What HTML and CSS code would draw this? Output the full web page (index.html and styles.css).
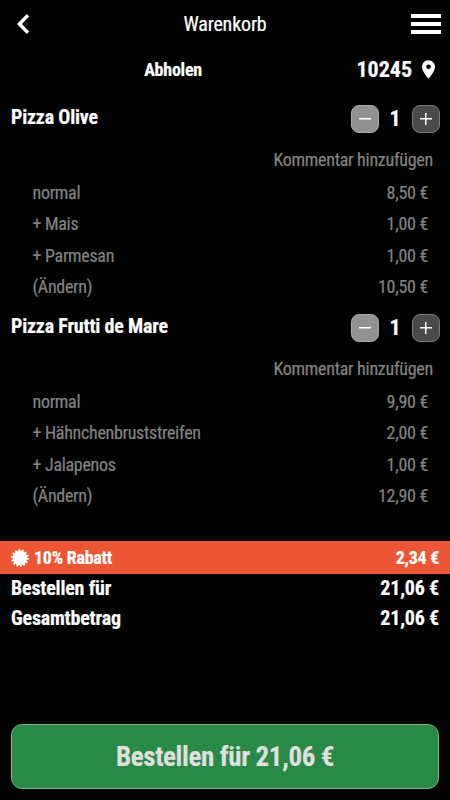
FILE: index.html
```html
<!DOCTYPE html>
<html lang="de">
<head>
<meta charset="utf-8">
<title>Warenkorb</title>
<link rel="stylesheet" href="styles.css">
</head>
<body>
<header class="topbar">
  <svg class="back" viewBox="0 0 14 20"><path d="M12 1.3 3.4 10l8.6 8.7" fill="none" stroke="#fff" stroke-width="3.4"/></svg>
  <h1>Warenkorb</h1>
  <div class="menu"><span></span><span></span><span></span></div>
</header>
<div class="pickup">
  <strong class="mode">Abholen</strong>
  <strong class="zip">10245</strong>
  <svg class="pin" viewBox="5 2 14 20"><path fill="#fff" d="M12 2C8.13 2 5 5.13 5 9c0 5.25 7 13 7 13s7-7.75 7-13c0-3.87-3.13-7-7-7zm0 9.5a2.5 2.5 0 0 1 0-5 2.5 2.5 0 0 1 0 5z"/></svg>
</div>
<main>
  <section class="item">
    <div class="head"><h2>Pizza Olive</h2><div class="stepper"><button class="minus"></button><b>1</b><button class="plus"></button></div></div>
    <div class="comment">Kommentar hinzufügen</div>
    <div class="row"><span>normal</span><span>8,50 €</span></div>
    <div class="row"><span>+ Mais</span><span>1,00 €</span></div>
    <div class="row"><span>+ Parmesan</span><span>1,00 €</span></div>
    <div class="row"><span>(Ändern)</span><span>10,50 €</span></div>
  </section>
  <section class="item">
    <div class="head"><h2>Pizza Frutti de Mare</h2><div class="stepper"><button class="minus"></button><b>1</b><button class="plus"></button></div></div>
    <div class="comment">Kommentar hinzufügen</div>
    <div class="row"><span>normal</span><span>9,90 €</span></div>
    <div class="row"><span>+ Hähnchenbruststreifen</span><span>2,00 €</span></div>
    <div class="row"><span>+ Jalapenos</span><span>1,00 €</span></div>
    <div class="row"><span>(Ändern)</span><span>12,90 €</span></div>
  </section>
</main>
<div class="discount">
  <svg class="badge" viewBox="-9 -9 18 18"><circle r="7.4" fill="#fff"/><circle r="7.8" fill="none" stroke="#fff" stroke-width="2.2" stroke-dasharray="1.75 1.75"/></svg>
  <span>10% Rabatt</span><span class="amount">2,34 €</span>
</div>
<div class="total"><span>Bestellen für</span><span>21,06 €</span></div>
<div class="total"><span>Gesamtbetrag</span><span>21,06 €</span></div>
<button class="order">Bestellen für 21,06 €</button>
</body>
</html>
```
FILE: styles.css
```css
* { box-sizing: border-box; margin: 0; padding: 0; }
body {
  display: flex;
  flex-direction: column;
  height: 800px;
  overflow: hidden;
  background: #020202;
  color: #fff;
  font-family: "Roboto Condensed", Roboto, sans-serif;
  font-stretch: 75%;
  -webkit-text-stroke: 0.2px currentColor;
}
button { font: inherit; }
.topbar {
  display: grid;
  grid-template-columns: 40px 1fr 40px;
  align-items: center;
  height: 48px;
  padding: 0 9px 0 16px;
}
.back { width: 14px; height: 20px; }
h1 { font-size: 20px; font-weight: 400; letter-spacing: -0.15px; text-align: center; margin-right: 7px; }
.menu { display: grid; gap: 4px; width: 30px; justify-self: end; }
.menu span { height: 4px; background: #fff; }
.pickup {
  display: grid;
  grid-template-columns: 324px 1fr 13px;
  align-items: center;
  height: 44px;
  padding: 0 15px 2px 11px;
}
.mode { font-size: 18px; letter-spacing: -0.25px; text-align: center; }
.zip { font-size: 22px; text-align: right; padding-right: 10px; }
.pin { width: 13px; height: 19px; }
main { padding-top: 6px; }
.item { height: 209px; }
.head {
  display: flex;
  justify-content: space-between;
  align-items: center;
  height: 41px;
  padding: 0 10.5px 0 11px;
}
h2 { font-size: 20px; font-weight: 700; letter-spacing: -0.2px; padding-bottom: 3px; }
.stepper { display: flex; align-items: center; }
.stepper b { width: 33px; text-align: center; font-size: 22px; }
.minus, .plus {
  width: 28px;
  height: 28px;
  border: 1px solid #aaa;
  border-radius: 8px;
  background: linear-gradient(#fff, #fff) center / 12px 1.5px no-repeat #919191;
}
.plus {
  border-color: #7b7b7b;
  background: linear-gradient(#fff, #fff) center / 12px 1.5px no-repeat, linear-gradient(#fff, #fff) center / 1.5px 12px no-repeat #4a4a4a;
}
.comment { height: 37.5px; line-height: 41px; padding-right: 17px; text-align: right; font-size: 18px; letter-spacing: -0.27px; color: #828282; }
.row {
  display: flex;
  justify-content: space-between;
  height: 31.5px;
  line-height: 31.5px;
  padding: 0 22px 0 32.5px;
  font-size: 18px;
  letter-spacing: -0.3px;
  color: #828282;
}
.discount {
  display: flex;
  align-items: center;
  height: 33px;
  margin-top: 25px;
  padding: 0 11px;
  background: #ec5635;
  font-size: 18px;
  font-weight: 700;
  letter-spacing: -0.27px;
}
.badge { width: 18px; height: 18px; margin-right: 5px; }
.amount { margin-left: auto; }
.total {
  display: flex;
  justify-content: space-between;
  height: 29.5px;
  line-height: 29.5px;
  padding: 0 11px;
  font-size: 20px;
  font-weight: 700;
  letter-spacing: -0.2px;
}
.order {
  height: 65px;
  margin: auto 11px 11px;
  border: 1px solid #79b489;
  border-radius: 11px;
  background: #298947;
  color: #dfdfdf;
  font-size: 27px;
  font-weight: 700;
  letter-spacing: -0.37px;
}
```
